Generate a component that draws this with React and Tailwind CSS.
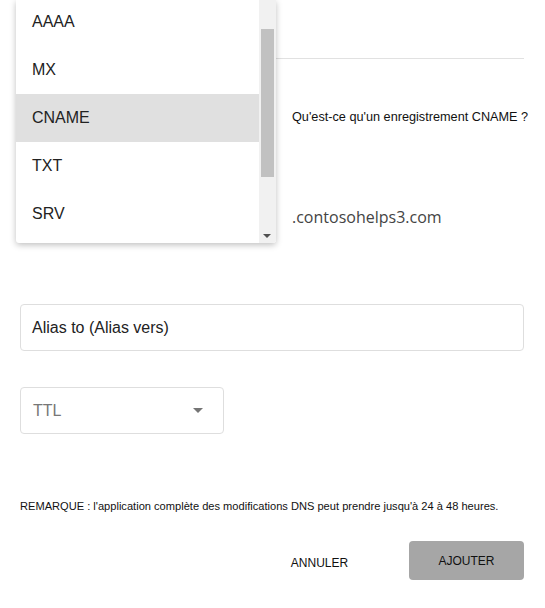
import React from "react";

const items = ["AAAA", "MX", "CNAME", "TXT", "SRV"];

export default function App() {
  return (
    <div className="relative w-[545px] h-[608px] overflow-hidden bg-white font-['Liberation_Sans',Arial,sans-serif] text-[#222]">
      {/* underlying form */}
      <div className="px-5">
        <div className="h-[59px] border-b border-[#e1e1e1] mr-[1px]" />
        <div className="flex h-[65px] items-end pl-[272px]">
          <span className="whitespace-nowrap text-[12.7px] leading-[14px] text-[#111]">Qu'est-ce qu'un enregistrement CNAME ?</span>
        </div>
        <div className="flex h-[104px] items-end pl-[272px]">
          <span className="font-['Open_Sans',sans-serif] text-[16px] leading-[22px] text-[#444]">.contosohelps3.com</span>
        </div>
        <div className="mt-[76px] mr-[1px] h-[47px] rounded-[4px] border border-[#dedede] flex items-center pl-[11px]">
          <span className="text-[16px] text-[#222]">Alias to (Alias vers)</span>
        </div>
        <div className="mt-[36px] w-[204px] h-[47px] rounded-[4px] border border-[#dedede] flex items-center justify-between pl-[12px] pr-[20px]">
          <span className="text-[16px] text-[#777]">TTL</span>
          <svg width="10" height="5" viewBox="0 0 10 5"><path d="M0 0h10L5 5z" fill="#757575" /></svg>
        </div>
        <div className="mt-[65px] text-[11.1px] leading-[14px] text-[#111]">
          REMARQUE : l'application complète des modifications DNS peut prendre jusqu'à 24 à 48 heures.
        </div>
        <div className="mt-[28px] flex justify-end gap-[32px] pr-[1px]">
          <button className="w-[115px] h-[39px] pt-[4px] text-[12px] text-[#111] bg-transparent">ANNULER</button>
          <button className="w-[115px] h-[39px] rounded-[4px] bg-[#a6a6a6] text-[12px] text-[#111]">AJOUTER</button>
        </div>
      </div>

      {/* open dropdown menu */}
      <div className="absolute left-[16px] top-0 w-[260px] h-[243px] bg-white rounded-b-[3px] shadow-[0_2px_6px_rgba(0,0,0,0.25)] overflow-hidden flex">
        <div className="flex-1 -mt-[2px]">
          {items.map((it) => (
            <div
              key={it}
              className={`h-[48px] flex items-center pl-[16px] text-[16px] text-[#222] ${it === "CNAME" ? "bg-[#e0e0e0]" : ""}`}
            >
              {it}
            </div>
          ))}
        </div>
        <div className="relative w-[17px] bg-[#f1f1f1]">
          <div className="absolute left-[2px] top-[29px] w-[13px] h-[148px] bg-[#c1c1c1]" />
          <svg className="absolute left-[4px] bottom-[5px]" width="8" height="4" viewBox="0 0 8 4"><path d="M0 0h8L4 4z" fill="#505050" /></svg>
        </div>
      </div>
    </div>
  );
}
